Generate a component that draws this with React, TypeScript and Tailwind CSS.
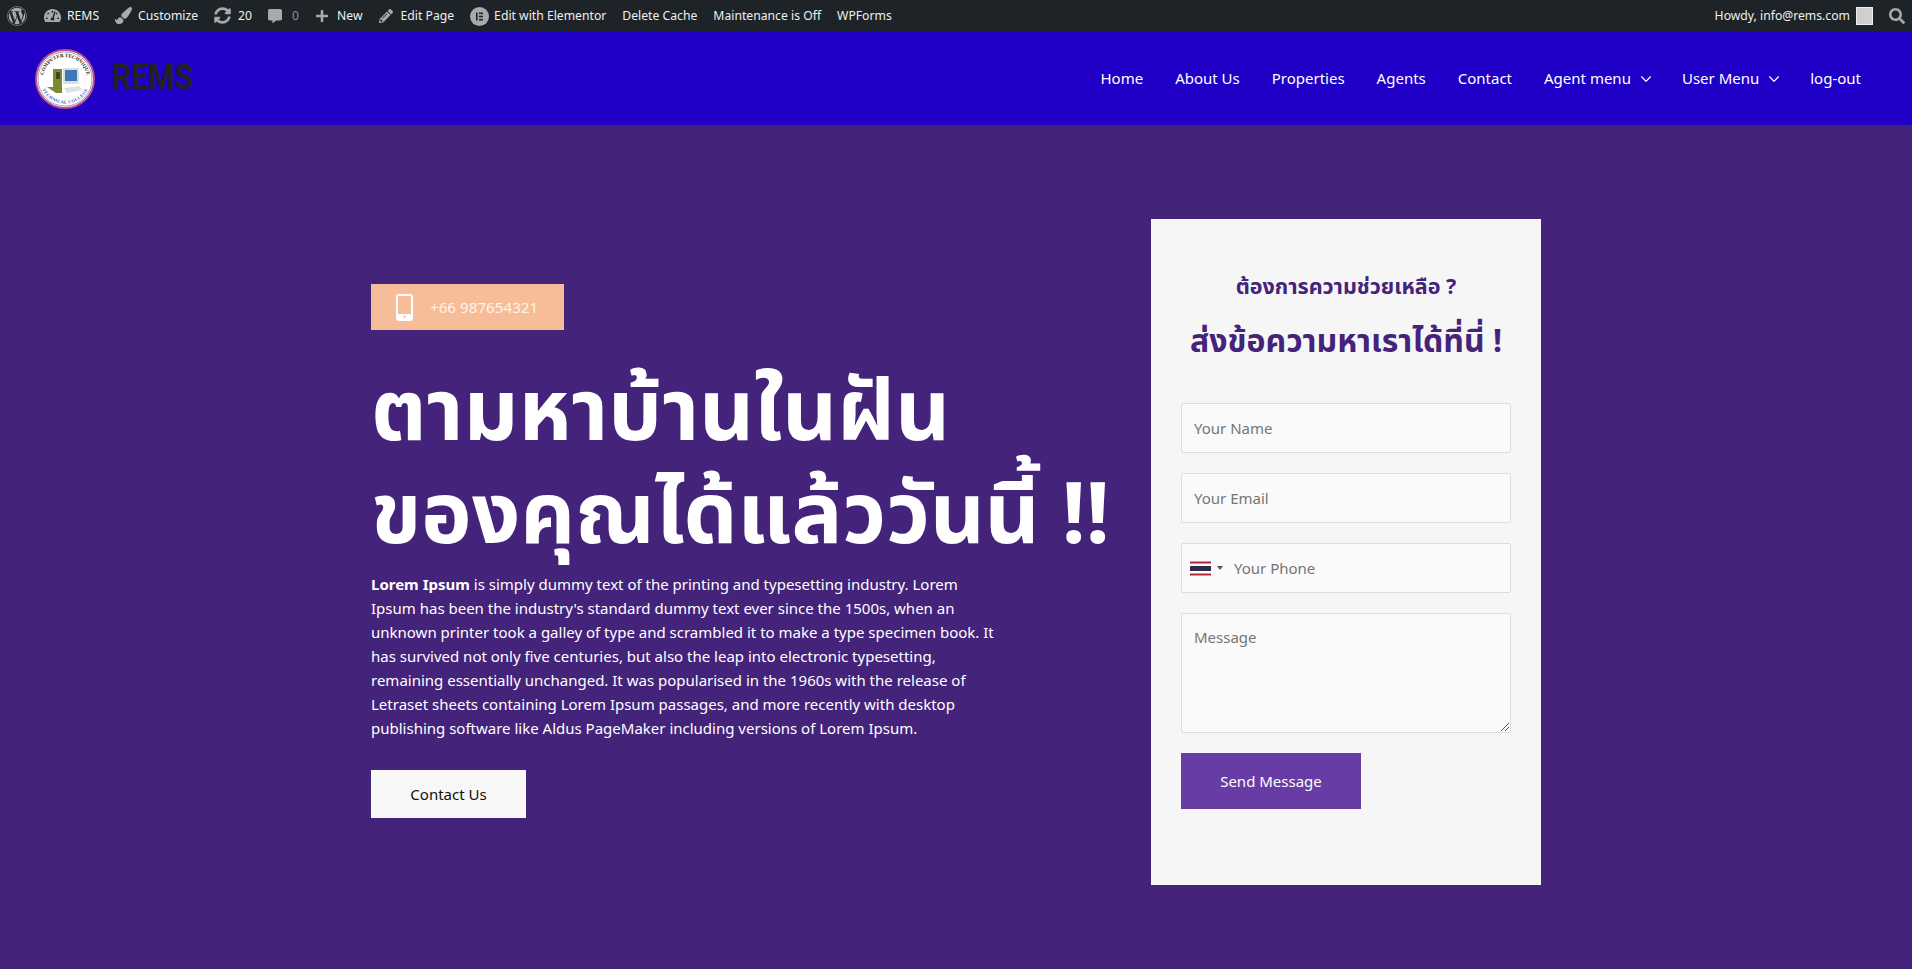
import React from 'react';
import { ChevronDown } from 'lucide-react';
import { FaWordpress, FaTachometerAlt, FaPaintBrush, FaSyncAlt, FaCommentAlt, FaPlus, FaPencilAlt, FaSearch } from 'react-icons/fa';

const BODY_FONT = "font-['Noto_Sans','Noto_Sans_Thai',sans-serif]";

const navItems = [
  { label: 'Home' },
  { label: 'About Us' },
  { label: 'Properties' },
  { label: 'Agents' },
  { label: 'Contact' },
  { label: 'Agent menu', sub: true },
  { label: 'User Menu', sub: true },
  { label: 'log-out' },
];

const AdminItem: React.FC<{ icon?: React.ReactNode; label: string; muted?: boolean; gap?: string }> = ({ icon, label, muted, gap = 'gap-[7px]' }) => (
  <div className={`flex items-center ${gap}`}>
    {icon}
    <span className={muted ? 'text-[#8c8f94]' : ''}>{label}</span>
  </div>
);

const ElementorIcon = () => (
  <svg width="19" height="19" viewBox="0 0 19 19">
    <circle cx="9.5" cy="9.5" r="9.5" fill="#a7aaad" />
    <rect x="6" y="5.5" width="1.6" height="8" fill="#1d2327" />
    <rect x="9" y="5.5" width="4" height="1.6" fill="#1d2327" />
    <rect x="9" y="8.7" width="4" height="1.6" fill="#1d2327" />
    <rect x="9" y="11.9" width="4" height="1.6" fill="#1d2327" />
  </svg>
);

const Logo = () => (
  <svg width="60" height="60" viewBox="0 0 60 60">
    <defs>
      <path id="logo-top" d="M8 30 A22 22 0 0 1 52 30" />
      <path id="logo-bottom" d="M9 36 A22 22 0 0 0 51 36" />
    </defs>
    <circle cx="30" cy="30" r="29" fill="#fff" stroke="#b5527f" strokeWidth="2" />
    <circle cx="30" cy="30" r="27" fill="none" stroke="#a99ccb" strokeWidth="1" />
    <text fontSize="5" fontWeight="700" fill="#222" fontFamily="'Liberation Serif', serif">
      <textPath href="#logo-top" startOffset="50%" textAnchor="middle">COMPUTER TECHNIQUE</textPath>
    </text>
    <text fontSize="4.4" fontWeight="700" fill="#2f4fc0" fontFamily="'Liberation Serif', serif">
      <textPath href="#logo-bottom" startOffset="50%" textAnchor="middle" dominantBaseline="hanging">TECHNICAL COLLEGE</textPath>
    </text>
    <path d="M18 20h9v24h-6l-9-6h6z" fill="#7b8a2e" />
    <rect x="21" y="23" width="4" height="7" fill="#3d4a1a" />
    <rect x="28" y="19" width="16" height="16" fill="#d8dde0" />
    <rect x="30" y="21" width="12" height="11" fill="#3f78b5" />
    <path d="M29 39l15-2 4 4-16 3z" fill="#dfe2e2" />
  </svg>
);

const Field: React.FC<{ placeholder: string }> = ({ placeholder }) => (
  <div className="h-[50px] rounded-[2px] border border-[#dddddd] bg-[#fafafa] px-3 flex items-center text-[15px] text-[#757575]">
    {placeholder}
  </div>
);

const App: React.FC = () => {
  return (
    <div className={`min-h-[969px] flex flex-col bg-[#44237a] ${BODY_FONT}`}>
      <div className="h-8 shrink-0 bg-[#1d2327] flex items-center justify-between text-[12.2px] text-[#f0f0f1] pl-[7px] pr-[7px]">
        <div className="flex items-center gap-[17px]">
          <FaWordpress className="text-[20px] text-[#a7aaad]" />
          <div className="flex items-center gap-[16px]">
            <AdminItem icon={<FaTachometerAlt className="text-[17px] text-[#a7aaad]" />} label="REMS" gap="gap-[6px]" />
            <AdminItem icon={<FaPaintBrush className="text-[17px] text-[#a7aaad]" />} label="Customize" gap="gap-[6px]" />
            <AdminItem icon={<FaSyncAlt className="text-[17px] text-[#a7aaad]" />} label="20" />
            <AdminItem icon={<FaCommentAlt className="text-[14px] text-[#a7aaad]" />} label="0" muted gap="gap-[10px]" />
            <AdminItem icon={<FaPlus className="text-[14px] text-[#a7aaad]" />} label="New" gap="gap-[8px]" />
            <AdminItem icon={<FaPencilAlt className="text-[14px] text-[#a7aaad]" />} label="Edit Page" gap="gap-[8px]" />
            <AdminItem icon={<ElementorIcon />} label="Edit with Elementor" gap="gap-[5px]" />
            <AdminItem label="Delete Cache" />
            <AdminItem label="Maintenance is Off" />
            <AdminItem label="WPForms" />
          </div>
        </div>
        <div className="flex items-center">
          <span>Howdy, info@rems.com</span>
          <span className="ml-[6px] w-[17px] h-[18px] bg-[#cfcfcf] border border-[#eee] mr-[16px]" />
          <FaSearch className="text-[16px] text-[#a7aaad]" />
        </div>
      </div>

      <header className="h-[93px] shrink-0 bg-[#2000c6] flex items-center justify-between pl-[35px] pr-[51px]">
        <div className="flex items-center gap-[17px]">
          <Logo />
          <span className="font-['Roboto',sans-serif] font-bold text-[35px] text-[#222222] origin-left scale-x-[0.86]">REMS</span>
        </div>
        <nav className="flex items-center gap-8 text-[15px] text-white">
          {navItems.map((item) => (
            <div key={item.label} className="flex items-center gap-[6px]">
              <span>{item.label}</span>
              {item.sub && <ChevronDown size={18} strokeWidth={1.5} className="-mr-[5px]" />}
            </div>
          ))}
        </nav>
      </header>

      <main className="flex-1 flex justify-center pt-[94px]">
        <div className="w-[780px] pt-[65px]">
          <div className="w-[193px] h-[46px] bg-[#f6bd98] flex items-center pl-[25px] gap-[17px] text-[15.2px] text-[#fff3ea]">
            <svg width="17" height="27" viewBox="0 0 17 27" className="shrink-0">
              <rect x="1" y="1" width="15" height="25" rx="2" fill="none" stroke="#fff" strokeWidth="2" />
              <rect x="1" y="20" width="15" height="6" fill="#fff" />
              <circle cx="8.5" cy="23" r="1.2" fill="#f6bd98" />
            </svg>
            +66 987654321
          </div>
          <h1 className="mt-[26px] text-[85px] leading-[103px] font-bold text-white whitespace-nowrap">
            ตามหาบ้านในฝัน
            <br />
            ของคุณได้แล้ววันนี้ !!
          </h1>
          <p className="mt-[10px] w-[632px] text-[15px] leading-6 text-white">
            <strong>Lorem Ipsum</strong> is simply dummy text of the printing and typesetting industry. Lorem Ipsum has been the industry's standard dummy text ever since the 1500s, when an unknown printer took a galley of type and scrambled it to make a type specimen book. It has survived not only five centuries, but also the leap into electronic typesetting, remaining essentially unchanged. It was popularised in the 1960s with the release of Letraset sheets containing Lorem Ipsum passages, and more recently with desktop publishing software like Aldus PageMaker including versions of Lorem Ipsum.
          </p>
          <div className="mt-[30px] w-[155px] h-12 bg-[#f7f7f7] flex items-center justify-center text-[15px] text-[#111]">
            Contact Us
          </div>
        </div>

        <aside className="w-[390px] h-[666px] bg-[#f6f6f6] px-[30px] pt-[55px]">
          <p className="text-center text-[21.5px] font-bold text-[#44237a] leading-[24px]">ต้องการความช่วยเหลือ ?</p>
          <p className="mt-[24px] text-center text-[32px] font-bold text-[#44237a] leading-[36px] whitespace-nowrap">ส่งข้อความหาเราได้ที่นี่ !</p>
          <div className="mt-[45px] flex flex-col gap-[20px]">
            <Field placeholder="Your Name" />
            <Field placeholder="Your Email" />
            <div className="h-[50px] rounded-[2px] border border-[#dddddd] bg-[#fafafa] pl-2 flex items-center text-[15px] text-[#757575]">
              <svg width="21" height="15" viewBox="0 0 21 15">
                <rect width="21" height="15" fill="#fff" />
                <rect y="0.5" width="21" height="2" fill="#b3243a" />
                <rect y="5" width="21" height="5" fill="#2d2a4a" />
                <rect y="12.5" width="21" height="2" fill="#b3243a" />
              </svg>
              <span className="ml-[6px] w-0 h-0 border-x-[3px] border-x-transparent border-t-[4px] border-t-[#555]" />
              <span className="ml-[11px]">Your Phone</span>
            </div>
            <div className="relative h-[120px] rounded-[2px] border border-[#dddddd] bg-[#fafafa] px-3 pt-[12px] text-[15px] text-[#757575]">
              Message
              <svg width="8" height="8" viewBox="0 0 8 8" className="absolute right-[1px] bottom-[1px]">
                <path d="M0 8L8 0M4 8L8 4" stroke="#555" strokeWidth="1" />
              </svg>
            </div>
          </div>
          <div className="mt-[20px] w-[180px] h-[56px] bg-[#673ca4] flex items-center justify-center text-[15px] text-white">
            Send Message
          </div>
        </aside>
      </main>
    </div>
  );
};

export default App;
